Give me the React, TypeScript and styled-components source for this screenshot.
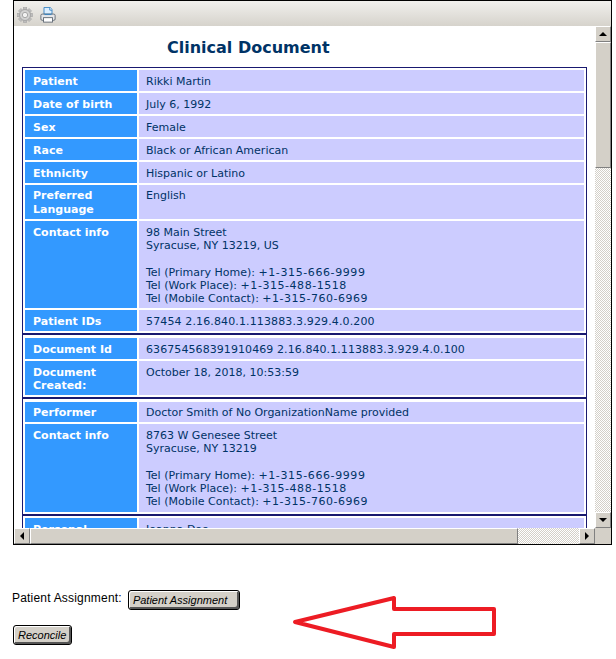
import React from 'react';
import styled, { createGlobalStyle } from 'styled-components';

const GlobalStyle = createGlobalStyle`
  html, body {
    margin: 0;
    padding: 0;
    background: #fff;
  }
`;

const Page = styled.div`
  position: relative;
  width: 616px;
  height: 659px;
  overflow: hidden;
`;

const Frame = styled.div`
  margin-left: 13px;
  width: 597px;
  height: 543px;
  border: 1px solid #000;
  display: flex;
  flex-direction: column;
`;

const Toolbar = styled.div`
  height: 25px;
  flex: none;
  display: flex;
  align-items: center;
  gap: 7px;
  padding: 3px 0 0 3px;
  box-sizing: border-box;
  background: linear-gradient(#f1f0ed, #d6d3cc);
`;

const Middle = styled.div`
  flex: 1;
  min-height: 0;
  display: flex;
`;

const Viewport = styled.div`
  flex: 1;
  overflow: hidden;
  background: #fff;
  padding: 0 8px;
  font-family: "DejaVu Sans", Verdana, sans-serif;
`;

const Title = styled.h1`
  margin: 0;
  height: 41px;
  padding: 12px 0 0 145px;
  box-sizing: border-box;
  font-size: 16px;
  line-height: 20px;
  font-weight: bold;
  color: #003366;
`;

const Section = styled.div<{ $first?: boolean; $inset: number }>`
  width: 565px;
  box-sizing: border-box;
  border-left: 1px solid #191970;
  border-right: 1px solid #191970;
  border-top: ${({ $first }) => ($first ? '1px' : '2px')} solid #191970;
  padding-top: ${({ $inset }) => $inset}px;
`;

const Table = styled.table`
  width: 100%;
  border-collapse: separate;
  border-spacing: 2px;
  table-layout: fixed;
  font-size: 11px;
  line-height: 13px;
`;

const Label = styled.th<{ $top: number; $bottom: number }>`
  padding: ${({ $top, $bottom }) => `${$top}px 0 ${$bottom}px 8px`};
  box-sizing: border-box;
  background: #3399ff;
  color: #fff;
  font-weight: bold;
  text-align: left;
  vertical-align: top;
`;

const Value = styled.td<{ $top: number; $bottom: number }>`
  padding: ${({ $top, $bottom }) => `${$top}px 0 ${$bottom}px 7px`};
  background: #ccccff;
  color: #003366;
  vertical-align: top;
`;

const BlankLine = styled.span`
  display: block;
  height: 14px;
`;

const LooseLine = styled.span`
  display: block;
  line-height: 14px;
`;

const Spaced = styled.span<{ $spacing: number }>`
  letter-spacing: ${({ $spacing }) => $spacing}px;
`;

const VBar = styled.div`
  width: 16px;
  flex: none;
  display: flex;
  flex-direction: column;
  background: #d4d0c8;
`;

const HBar = styled.div`
  height: 16px;
  flex: none;
  display: flex;
  background: #d4d0c8;
`;

const ArrowButton = styled.div`
  width: 16px;
  height: 16px;
  flex: none;
  box-sizing: border-box;
  display: flex;
  align-items: center;
  justify-content: center;
  background: #d4d0c8;
  border: 1px solid;
  border-color: #fff #808080 #808080 #fff;
`;

const Thumb = styled.div<{ $size: number; $vertical?: boolean }>`
  flex: none;
  box-sizing: border-box;
  background: #d4d0c8;
  ${({ $vertical, $size }) => ($vertical ? `height: ${$size}px;` : `width: ${$size}px;`)}
  border: 1px solid;
  border-color: #fff #808080 #808080 #fff;
`;

const Track = styled.div`
  flex: 1;
  background-color: #fff;
  background-image: conic-gradient(#d4d0c8 25%, #fff 0 50%, #d4d0c8 0 75%, #fff 0);
  background-size: 2px 2px;
`;

const Corner = styled.div`
  width: 16px;
  flex: none;
  background: #d4d0c8;
`;

const Footer = styled.div`
  padding: 45px 0 0 12px;
  font-family: "Liberation Sans", Arial, sans-serif;
`;

const AssignRow = styled.div`
  display: flex;
  align-items: center;
  gap: 6px;
  height: 20px;
  font-size: 12px;
  letter-spacing: 0.2px;
  color: #000;
`;

const AssignLabel = styled.span`
  margin-bottom: 5px;
`;

const ReconcileRow = styled.div`
  margin-top: 15px;
  padding-left: 1px;
`;

const ActionButton = styled.button<{ $width: number }>`
  width: ${({ $width }) => $width}px;
  height: 20px;
  padding: 0 0 0 4px;
  background: #d4d0c8;
  border: 1px solid #000;
  border-radius: 3px;
  box-shadow: inset 1px 1px 0 #fff, inset -2px -2px 0 #555;
  font-family: "Liberation Sans", Arial, sans-serif;
  font-style: italic;
  font-size: 11px;
  color: #000;
  text-align: left;
`;

const ArrowOverlay = styled.svg`
  position: absolute;
  left: 0;
  top: 0;
  pointer-events: none;
`;

function GearIcon() {
  const teeth = [0, 45, 90, 135];
  return (
    <svg width="16" height="16" viewBox="0 0 18 18">
      {teeth.map((a) => (
        <rect key={a} x="7" y="0.5" width="4" height="17" fill="#bdbdbd" stroke="#9a9a9a" strokeWidth="0.5" transform={`rotate(${a} 9 9)`} />
      ))}
      <circle cx="9" cy="9" r="6.2" fill="#d2d2d2" stroke="#a0a0a0" />
      <circle cx="9" cy="9" r="3" fill="#f2f2f2" stroke="#a0a0a0" />
    </svg>
  );
}

function PrinterIcon() {
  return (
    <svg width="16" height="16" viewBox="0 0 18 18">
      <path d="M4.5 8V0.5H11.5L13.5 3V8Z" fill="#dbeeff" stroke="#2f7fc1" />
      <path d="M11 0.5V3.5H13.5" fill="#fff" stroke="#2f7fc1" />
      <rect x="1" y="8" width="16" height="7" rx="1.5" fill="#e4e6ea" stroke="#5c6570" />
      <rect x="4" y="12" width="10" height="5" fill="#fff" stroke="#5c6570" />
      <path d="M5 8.5H13" stroke="#2f7fc1" />
    </svg>
  );
}

function Tri({ dir }: { dir: 'up' | 'down' | 'left' | 'right' }) {
  const points = {
    up: '0,6 8,6 4,2',
    down: '0,2 8,2 4,6',
    left: '6,0 6,8 2,4',
    right: '2,0 2,8 6,4',
  }[dir];
  return (
    <svg width="8" height="8" viewBox="0 0 8 8">
      <polygon points={points} fill="#000" />
    </svg>
  );
}

type Row = { label: React.ReactNode; value: React.ReactNode; top?: number; bottom?: number };

const phones = (
  <>
    Tel (Primary Home): <Spaced $spacing={0.6}>+1-315-666-9999</Spaced><br />
    Tel (Work Place): <Spaced $spacing={0.55}>+1-315-488-1518</Spaced><br />
    Tel (Mobile Contact): <Spaced $spacing={0.5}>+1-315-760-6969</Spaced>
  </>
);

const patientRows: Row[] = [
  { label: 'Patient', value: 'Rikki Martin' },
  { label: 'Date of birth', value: 'July 6, 1992' },
  { label: 'Sex', value: 'Female' },
  { label: 'Race', value: 'Black or African American' },
  { label: 'Ethnicity', value: 'Hispanic or Latino' },
  { label: <LooseLine>Preferred<br />Language</LooseLine>, value: 'English', top: 4, bottom: 2 },
  {
    label: 'Contact info',
    value: <>98 Main Street<br />Syracuse, NY 13219, US<BlankLine />{phones}</>,
  },
  { label: 'Patient IDs', value: <Spaced $spacing={0.13}>57454 2.16.840.1.113883.3.929.4.0.200</Spaced> },
];

const documentRows: Row[] = [
  { label: 'Document Id', value: <Spaced $spacing={0.08}>636754568391910469 2.16.840.1.113883.3.929.4.0.100</Spaced> },
  { label: <>Document<br />Created:</>, value: 'October 18, 2018, 10:53:59' },
];

const performerRows: Row[] = [
  { label: 'Performer', value: 'Doctor Smith of No OrganizationName provided', top: 4 },
  {
    label: 'Contact info',
    value: <>8763 W Genesee Street<br />Syracuse, NY 13219<BlankLine />{phones}</>,
    bottom: 4,
  },
];

const personalRows: Row[] = [{ label: 'Personal', value: 'Joanna Doe' }];

function InfoSection({ rows, first, inset = 1 }: { rows: Row[]; first?: boolean; inset?: number }) {
  return (
    <Section $first={first} $inset={inset}>
      <Table>
        <colgroup>
          <col style={{ width: 112 }} />
          <col />
        </colgroup>
        <tbody>
          {rows.map(({ label, value, top = 5, bottom = 3 }, i) => (
            <tr key={i}>
              <Label $top={top} $bottom={bottom}>{label}</Label>
              <Value $top={top} $bottom={bottom}>{value}</Value>
            </tr>
          ))}
        </tbody>
      </Table>
    </Section>
  );
}

export default function App() {
  return (
    <Page>
      <GlobalStyle />
      <Frame>
        <Toolbar>
          <GearIcon />
          <PrinterIcon />
        </Toolbar>
        <Middle>
          <Viewport>
            <Title>Clinical Document</Title>
            <InfoSection rows={patientRows} first inset={0} />
            <InfoSection rows={documentRows} />
            <InfoSection rows={performerRows} />
            <InfoSection rows={personalRows} inset={0} />
          </Viewport>
          <VBar>
            <ArrowButton><Tri dir="up" /></ArrowButton>
            <Thumb $vertical $size={126} />
            <Track />
            <ArrowButton><Tri dir="down" /></ArrowButton>
          </VBar>
        </Middle>
        <HBar>
          <ArrowButton><Tri dir="left" /></ArrowButton>
          <Thumb $size={488} />
          <Track />
          <ArrowButton><Tri dir="right" /></ArrowButton>
          <Corner />
        </HBar>
      </Frame>
      <Footer>
        <AssignRow>
          <AssignLabel>Patient Assignment:</AssignLabel>
          <ActionButton $width={112}>Patient Assignment</ActionButton>
        </AssignRow>
        <ReconcileRow>
          <ActionButton $width={59}>Reconcile</ActionButton>
        </ReconcileRow>
      </Footer>
      <ArrowOverlay width="616" height="659" viewBox="0 0 616 659">
        <polygon
          points="295,622 394,598 394,609 494,609 494,634 394,634 394,647"
          fill="none"
          stroke="#ed1c24"
          strokeWidth="4"
          strokeLinejoin="round"
        />
      </ArrowOverlay>
    </Page>
  );
}
